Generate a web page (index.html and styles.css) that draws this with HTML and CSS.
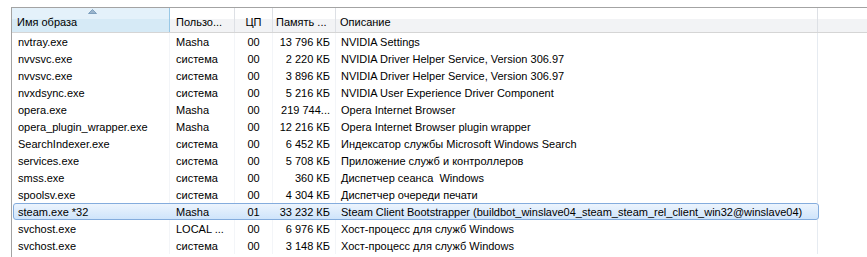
FILE: index.html
```html
<!DOCTYPE html>
<html lang="ru">
<head>
    <meta charset="UTF-8">
    <title>Процессы</title>
    <link rel="stylesheet" href="styles.css">
</head>
<body>
    <div class="list">
        <div class="row head">
            <div class="cell name sorted">
                <svg class="sort-arrow" width="9" height="5" viewBox="0 0 9 5"><path d="M0.5 4.5 L4.5 0.5 L8.5 4.5 Z" fill="#9ab4cc" stroke="#6f93b5" stroke-width="0.8"/></svg>
                Имя образа
            </div>
            <div class="cell user">Пользо...</div>
            <div class="cell cpu">ЦП</div>
            <div class="cell mem mem-head">Память ...</div>
            <div class="cell desc">Описание</div>
            <div class="cell rest"></div>
        </div>

        <div class="row"><div class="cell name">nvtray.exe</div><div class="cell user">Masha</div><div class="cell cpu">00</div><div class="cell mem">13 796 КБ</div><div class="cell desc">NVIDIA Settings</div><div class="cell rest"></div></div>
        <div class="row"><div class="cell name">nvvsvc.exe</div><div class="cell user">система</div><div class="cell cpu">00</div><div class="cell mem">2 220 КБ</div><div class="cell desc">NVIDIA Driver Helper Service, Version 306.97</div><div class="cell rest"></div></div>
        <div class="row"><div class="cell name">nvvsvc.exe</div><div class="cell user">система</div><div class="cell cpu">00</div><div class="cell mem">3 896 КБ</div><div class="cell desc">NVIDIA Driver Helper Service, Version 306.97</div><div class="cell rest"></div></div>
        <div class="row"><div class="cell name">nvxdsync.exe</div><div class="cell user">система</div><div class="cell cpu">00</div><div class="cell mem">5 216 КБ</div><div class="cell desc">NVIDIA User Experience Driver Component</div><div class="cell rest"></div></div>
        <div class="row"><div class="cell name">opera.exe</div><div class="cell user">Masha</div><div class="cell cpu">00</div><div class="cell mem">219 744...</div><div class="cell desc">Opera Internet Browser</div><div class="cell rest"></div></div>
        <div class="row"><div class="cell name">opera_plugin_wrapper.exe</div><div class="cell user">Masha</div><div class="cell cpu">00</div><div class="cell mem">12 216 КБ</div><div class="cell desc">Opera Internet Browser plugin wrapper</div><div class="cell rest"></div></div>
        <div class="row"><div class="cell name">SearchIndexer.exe</div><div class="cell user">система</div><div class="cell cpu">00</div><div class="cell mem">6 452 КБ</div><div class="cell desc">Индексатор службы Microsoft Windows Search</div><div class="cell rest"></div></div>
        <div class="row"><div class="cell name">services.exe</div><div class="cell user">система</div><div class="cell cpu">00</div><div class="cell mem">5 708 КБ</div><div class="cell desc">Приложение служб и контроллеров</div><div class="cell rest"></div></div>
        <div class="row"><div class="cell name">smss.exe</div><div class="cell user">система</div><div class="cell cpu">00</div><div class="cell mem">360 КБ</div><div class="cell desc">Диспетчер сеанса&nbsp; Windows</div><div class="cell rest"></div></div>
        <div class="row"><div class="cell name">spoolsv.exe</div><div class="cell user">система</div><div class="cell cpu">00</div><div class="cell mem">4 304 КБ</div><div class="cell desc">Диспетчер очереди печати</div><div class="cell rest"></div></div>
        <div class="row selected"><div class="cell name">steam.exe *32</div><div class="cell user">Masha</div><div class="cell cpu">01</div><div class="cell mem">33 232 КБ</div><div class="cell desc">Steam Client Bootstrapper (buildbot_winslave04_steam_steam_rel_client_win32@winslave04)</div><div class="cell rest"></div></div>
        <div class="row"><div class="cell name">svchost.exe</div><div class="cell user">LOCAL ...</div><div class="cell cpu">00</div><div class="cell mem">6 976 КБ</div><div class="cell desc">Хост-процесс для служб Windows</div><div class="cell rest"></div></div>
        <div class="row"><div class="cell name">svchost.exe</div><div class="cell user">система</div><div class="cell cpu">00</div><div class="cell mem">3 148 КБ</div><div class="cell desc">Хост-процесс для служб Windows</div><div class="cell rest"></div></div>
    </div>
</body>
</html>
```

FILE: styles.css
```css
html, body {
    margin: 0;
    background: #ffffff;
}
body {
    padding: 7px 0 0 11px;
    font-family: "Liberation Sans", "DejaVu Sans", sans-serif;
    font-size: 11px;
    color: #000000;
    overflow: hidden;
}
.list {
    border-top: 1px solid #a3a3a3;
    border-left: 1px solid #a3a3a3;
    height: 260px;
}
.row {
    display: grid;
    grid-template-columns: 158px 65px 38px 63px 482px 1fr;
    height: 17px;
    position: relative;
}
.cell {
    display: flex;
    align-items: center;
    padding: 0 6px;
    white-space: nowrap;
    overflow: hidden;
    border-right: 1px solid #f3f5f8;
}
.cpu {
    justify-content: center;
    padding: 0;
}
.mem {
    justify-content: flex-end;
    padding: 0 5px 0 0;
}
.desc {
    padding-left: 5px;
    overflow: visible;
    border-right-color: #e6ebf1;
}
.rest {
    border-right: none;
}

.head {
    height: 24px;
    border-bottom: 1px solid #d5d5d5;
    background: linear-gradient(#ffffff 0, #ffffff 45%, #f2f3f5 46%, #f2f3f5 100%);
}
.head .cell {
    border-right: 1px solid #dde0e5;
    padding-top: 3px;
}
.head .rest {
    border-right: none;
}
.head .mem-head {
    justify-content: flex-start;
    padding-left: 3px;
}
.head .desc {
    padding-left: 4px;
}
.head .sorted {
    position: relative;
    background: linear-gradient(#e4f1fa 0, #e4f1fa 45%, #d6eaf6 46%, #d6eaf6 100%);
    border-right: 1px solid #98c8e6;
    padding-left: 5px;
}
.sort-arrow {
    position: absolute;
    left: 76px;
    top: 1px;
}

.selected {
    margin-left: 1px;
    width: 806px;
    box-sizing: border-box;
    border: 1px solid #84acdd;
    border-radius: 3px;
    background: linear-gradient(#ecf4fd, #cfe4fb);
    grid-template-columns: 156px 65px 38px 63px 482px;
}
.selected .cell {
    border-right-color: transparent;
}
.selected .name {
    padding-left: 4px;
}
.selected .rest {
    display: none;
}
```
